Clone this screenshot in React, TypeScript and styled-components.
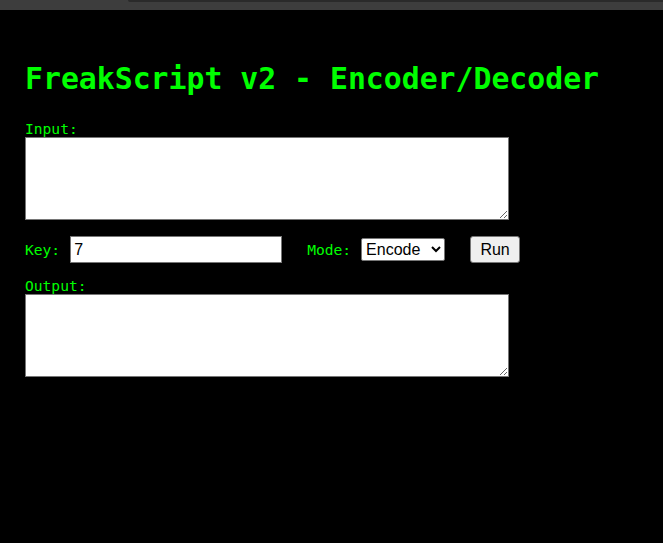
import React from "react";
import styled, { createGlobalStyle } from "styled-components";

const Global = createGlobalStyle`
  html, body { margin: 0; padding: 0; background: #000; }
  body { font-family: "DejaVu Sans Mono", "Liberation Mono", monospace; }
`;

const TopBar = styled.div`
  height: 10px;
  background: #3d3d3d;
  position: relative;
  overflow: hidden;
`;

const TabEdge = styled.div`
  position: absolute;
  left: 128px;
  right: 0;
  top: 0;
  height: 2px;
  background: #2a2a2a;
  border-bottom-left-radius: 4px;
`;

const Page = styled.main`
  padding: 0 25px;
  color: #00ff00;
`;

const Title = styled.h1`
  font-size: 29.8px;
  font-weight: bold;
  margin: 0;
  padding-top: 51px;
  line-height: 36px;
  color: #00ff00;
`;

const Label = styled.label<{ $top?: number }>`
  display: block;
  font-size: 14.6px;
  line-height: 17px;
  margin-top: ${(p) => p.$top ?? 0}px;
  margin-bottom: 0;
`;

const Area = styled.textarea`
  display: block;
  box-sizing: border-box;
  width: 484px;
  height: 83px;
  margin: 0;
  border: 1px solid #767676;
  background: #fff;
  font-family: "Liberation Mono", monospace;
  font-size: 13px;
`;

const Row = styled.div`
  display: flex;
  align-items: center;
  margin-top: 16px;
  height: 27px;
`;

const InlineLabel = styled.span<{ $ml?: number }>`
  font-size: 14.6px;
  margin-left: ${(p) => p.$ml ?? 0}px;
  margin-right: 10px;
`;

const KeyInput = styled.input`
  box-sizing: border-box;
  width: 212px;
  height: 27px;
  margin: 0;
  border: 1px solid #767676;
  padding: 0 3px;
  font-family: "Liberation Sans", Arial, sans-serif;
  font-size: 16px;
  background: #fff;
  color: #000;
`;

const Select = styled.select`
  box-sizing: border-box;
  width: 84px;
  height: 23px;
  margin: 0;
  border: 1px solid #767676;
  border-radius: 2px;
  font-family: "Liberation Sans", Arial, sans-serif;
  font-size: 16px;
  background: #fff;
  color: #000;
`;

const RunButton = styled.button`
  box-sizing: border-box;
  margin-left: 25px;
  width: 50px;
  height: 27px;
  border: 1px solid #767676;
  border-radius: 3px;
  background: #efefef;
  font-family: "Liberation Sans", Arial, sans-serif;
  font-size: 16px;
  color: #000;
  padding: 0;
`;

export default function App() {
  return (
    <>
      <Global />
      <TopBar>
        <TabEdge />
      </TopBar>
      <Page>
        <Title>FreakScript v2 - Encoder/Decoder</Title>
        <Label $top={23}>Input:</Label>
        <Area />
        <Row>
          <InlineLabel>Key:</InlineLabel>
          <KeyInput defaultValue="7" />
          <InlineLabel $ml={25}>Mode:</InlineLabel>
          <Select defaultValue="encode">
            <option value="encode">Encode</option>
            <option value="decode">Decode</option>
          </Select>
          <RunButton>Run</RunButton>
        </Row>
        <Label $top={14}>Output:</Label>
        <Area readOnly />
      </Page>
    </>
  );
}
